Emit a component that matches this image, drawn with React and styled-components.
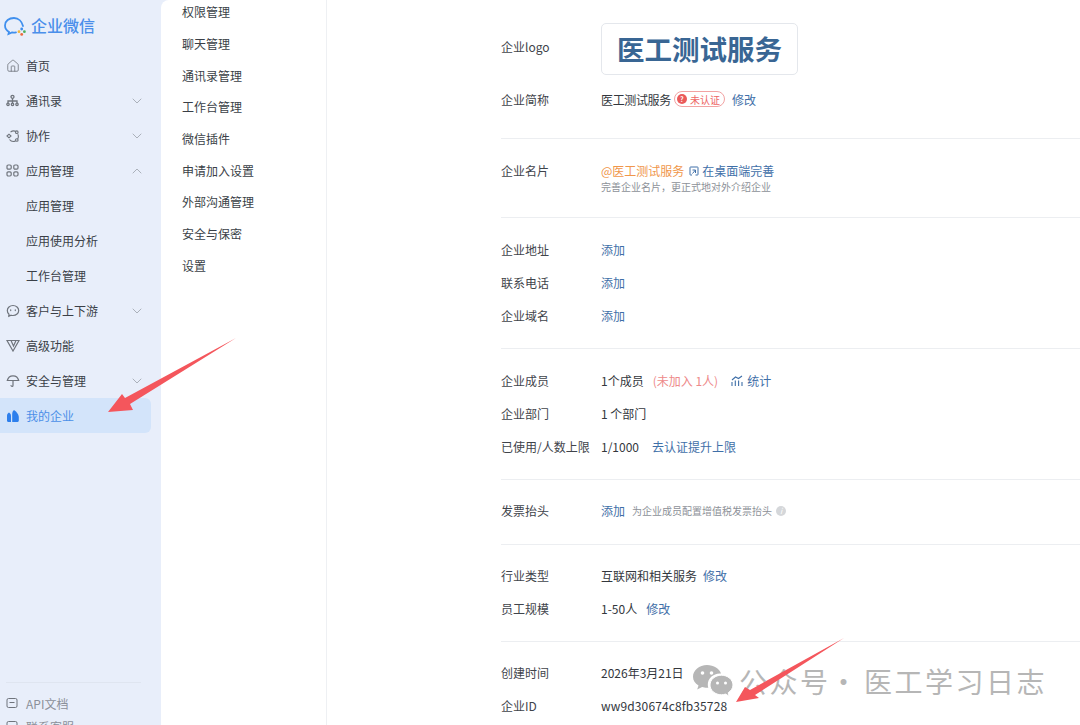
import React from 'react';
import styled, { createGlobalStyle } from 'styled-components';
import { ChevronDown, ChevronUp, Home } from 'lucide-react';

const GlobalStyle = createGlobalStyle`
  html, body {
    margin: 0;
    padding: 0;
    background: #fff;
  }
  body {
    font-family: "Noto Sans CJK SC", "Noto Sans", sans-serif;
    font-size: 12px;
    color: #33373d;
  }
`;

const Page = styled.div`
  position: relative;
  display: flex;
  width: 1080px;
  height: 725px;
  overflow: hidden;
  background: #e8eefa;
`;

// left navigation
const Sidebar = styled.aside`
  flex: 0 0 161px;
  display: flex;
  flex-direction: column;
  height: 725px;
`;

const Brand = styled.div`
  display: flex;
  align-items: center;
  gap: 4px;
  height: 48px;
  box-sizing: border-box;
  padding: 2px 0 0 3px;
  color: #4a8fea;
  font-size: 16px;
  font-weight: 500;
`;

const NavList = styled.nav`
  display: flex;
  flex-direction: column;
`;

const NavItem = styled.div`
  display: flex;
  align-items: center;
  height: 35px;
  width: 151px;
  box-sizing: border-box;
  padding-left: ${p => (p.$sub ? '26px' : '6px')};
  border-radius: 0 6px 6px 0;
  color: ${p => (p.$active ? '#4b8fe8' : '#3a3f47')};
  background: ${p => (p.$active ? '#d3e4fa' : 'transparent')};
`;

const NavIcon = styled.span`
  display: flex;
  width: 20px;
  color: ${p => (p.$active ? '#2d7fec' : '#6f747c')};
`;

const Caret = styled.span`
  display: flex;
  margin-left: auto;
  margin-right: 6px;
  color: #9ba1aa;
`;

const SideFooter = styled.div`
  margin-top: auto;
  margin-left: 6px;
  margin-right: 20px;
  border-top: 1px solid #dfe5f0;
  height: 43px;
  box-sizing: border-box;
  padding-top: 10px;
  color: #8b9099;
  overflow: hidden;
`;

const FooterLink = styled.div`
  display: flex;
  align-items: center;
  height: 20px;
  margin-bottom: 3px;
`;

// white panel with the rounded corner
const Panel = styled.div`
  flex: 1;
  display: flex;
  background: #fff;
  border-top-left-radius: 8px;
`;

const SubMenu = styled.div`
  flex: 0 0 166px;
  box-sizing: border-box;
  border-right: 1px solid #eef0f3;
  padding: 0 0 0 21px;
  margin-top: -4px;
  height: 729px;
`;

const SubItem = styled.div`
  display: flex;
  align-items: center;
  height: 31.67px;
  color: #3a3f47;
`;

// company info
const Content = styled.main`
  flex: 1;
  padding-left: 174px;
  display: flex;
  flex-direction: column;
`;

const Section = styled.section`
  display: flex;
  flex-direction: column;
  padding: ${p => p.$pad || '15px 0 16px'};
  border-bottom: ${p => (p.$last ? 'none' : '1px solid #eceef1')};
`;

const Row = styled.div`
  display: flex;
  align-items: ${p => (p.$top ? 'flex-start' : 'center')};
  height: ${p => p.$h || '33px'};
  margin-top: ${p => p.$mt || '0'};
`;

const Label = styled.div`
  flex: 0 0 100px;
  color: #3f444b;
`;

const LogoLabel = styled(Label)`
  margin-top: -6px;
`;

const Value = styled.div`
  display: flex;
  align-items: center;
  color: ${p => p.$color || '#33373d'};
  margin-left: ${p => p.$ml || '0'};
`;

const IdText = styled(Value)`
  letter-spacing: 0.12px;
`;

const ShortName = styled.span`
  letter-spacing: -0.35px;
`;

const Link = styled.span`
  display: inline-flex;
  align-items: center;
  color: #3f6fa8;
  margin-left: ${p => p.$ml || '0'};
`;

const Hint = styled.span`
  color: #8d9198;
  font-size: 10px;
  margin-left: ${p => p.$ml || '0'};
`;

const LogoBox = styled.div`
  display: flex;
  align-items: center;
  justify-content: center;
  width: 197px;
  height: 52px;
  box-sizing: border-box;
  padding-bottom: 3px;
  border: 1px solid #e4e7ec;
  border-radius: 5px;
  color: #396694;
  font-size: 27.5px;
  font-weight: 700;
`;

const Badge = styled.span`
  display: inline-flex;
  align-items: center;
  gap: 3px;
  height: 14px;
  margin-left: 3px;
  padding: 0 4px 0 2px;
  border: 1px solid #f2a3a3;
  border-radius: 8px;
  color: #e66;
  font-size: 10px;
`;

const BadgeDot = styled.span`
  display: flex;
  align-items: center;
  justify-content: center;
  width: 10px;
  height: 10px;
  border-radius: 50%;
  background: #ea5a5a;
  color: #fff;
  font-size: 7px;
  font-weight: 700;
`;

const InfoDot = styled.span`
  display: inline-flex;
  align-items: center;
  justify-content: center;
  width: 10px;
  height: 10px;
  margin-left: 4px;
  border-radius: 50%;
  background: #d5d7da;
  color: #fff;
  font-size: 8px;
  font-style: italic;
`;

const Stack = styled.div`
  display: flex;
  flex-direction: column;
`;

// annotation arrows and watermark lying over the page
const Overlay = styled.svg`
  position: absolute;
  left: 0;
  top: 0;
  pointer-events: none;
`;

const Watermark = styled.div`
  position: absolute;
  left: 693px;
  top: 661px;
  display: flex;
  align-items: center;
  height: 40px;
  color: #b6b6b6;
  font-size: 28px;
  letter-spacing: 2.5px;
  white-space: nowrap;
`;

const WatermarkPart = styled.span`
  margin-left: ${p => p.$ml};
`;

const Logo = () => (
  <svg width="24" height="24" viewBox="0 0 24 24" fill="none">
    <path d="M20 13C19 8.500 15.500 5 11 5 6 5 2 8 2 12.500c0 2.800 1.600 5 4 6.500l-.5 2 3.500-1.500c1.500.2 3 .1 4-.2" stroke="#3f8fee" strokeWidth="1.800" strokeLinecap="round" />
    <circle cx="18.700" cy="16" r="1.400" fill="#3f8fee" />
    <circle cx="16" cy="18.700" r="1.400" fill="#f1b53c" />
    <circle cx="21.400" cy="18.700" r="1.400" fill="#4fb05f" />
    <circle cx="18.700" cy="21.400" r="1.400" fill="#ec6a3c" />
  </svg>
);

const Org = () => (
  <svg width="13" height="13" viewBox="0 0 13 13" fill="none" stroke="currentColor" strokeWidth="1.300">
    <circle cx="6.500" cy="2.800" r="1.500" />
    <path d="M2 9V7h9v2M6.500 4.500V9" />
    <circle cx="2" cy="10.300" r="1.200" />
    <circle cx="6.500" cy="10.300" r="1.200" />
    <circle cx="11" cy="10.300" r="1.200" />
  </svg>
);

const Collab = () => (
  <svg width="14" height="14" viewBox="0 0 14 14" fill="none" stroke="currentColor" strokeWidth="1.100">
    <path d="M4.500 3.200A5 5 0 0 1 10 2.500M11.800 5.200a5 5 0 0 1-.3 5M9.500 12A5 5 0 0 1 3.500 10.500" />
    <path d="M1 7l2-1.800L5 7 3 8.800z" />
    <circle cx="10.800" cy="3.200" r="1.300" />
    <circle cx="10.800" cy="11" r="1.300" />
  </svg>
);

const Apps = () => (
  <svg width="13" height="13" viewBox="0 0 13 13" fill="none" stroke="currentColor" strokeWidth="1.200">
    <rect x="1" y="1" width="4.200" height="4.200" rx="1.200" />
    <rect x="7.800" y="1" width="4.200" height="4.200" rx="1.200" />
    <rect x="1" y="7.800" width="4.200" height="4.200" rx="1.200" />
    <rect x="7.800" y="7.800" width="4.200" height="4.200" rx="1.200" />
  </svg>
);

const Chat = () => (
  <svg width="14" height="14" viewBox="0 0 14 14" fill="none" stroke="currentColor" strokeWidth="1.200">
    <path d="M7 1.500c3.200 0 5.700 2.200 5.700 5s-2.500 5-5.700 5c-.7 0-1.300-.1-1.900-.3l-2.300 1.100.2-2.100C1.900 9.300 1.300 8 1.300 6.500c0-2.800 2.500-5 5.700-5z" />
    <path d="M4.700 5.800v.8M9.300 5.800v.8" strokeLinecap="round" />
  </svg>
);

const Advanced = () => (
  <svg width="14" height="13" viewBox="0 0 14 13" fill="none" stroke="currentColor" strokeWidth="1.200">
    <path d="M1 1.500h12L7 12z" />
    <path d="M5 1.500L7.500 7 10 1.500" />
  </svg>
);

const Umbrella = () => (
  <svg width="14" height="14" viewBox="0 0 14 14" fill="none" stroke="currentColor" strokeWidth="1.200">
    <path d="M1.300 6.500C2 3.500 4.200 1.800 7 1.800s5 1.700 5.700 4.700z" />
    <path d="M7 6.500v5c0 1.200-1.800 1.200-2 0" strokeLinecap="round" />
  </svg>
);

const Company = () => (
  <svg width="14" height="14" viewBox="0 0 14 14" fill="currentColor">
    <path d="M1 6.500C1 5 2 4 3 3.500c.8.600 2 1.800 2 3V13H2.200C1.500 13 1 12.500 1 11.800z" />
    <path d="M6.200 5c0-1.800.8-3.200 1.800-4 1.500 1 4.800 4 4.800 7v3.800c0 .7-.5 1.200-1.200 1.200H6.200z" />
  </svg>
);

const ApiDoc = () => (
  <svg width="12" height="12" viewBox="0 0 12 12" fill="none" stroke="currentColor" strokeWidth="1">
    <rect x="1" y="1.500" width="10" height="9" rx="1.500" />
    <path d="M3.500 5.500h5" />
  </svg>
);

const OpenBox = () => (
  <svg width="10" height="10" viewBox="0 0 10 10" fill="none" stroke="#3f6fa8" strokeWidth="1" style={{ marginRight: 3 }}>
    <path d="M3 9H1.500a.5.500 0 0 1-.5-.500V1.500a.5.500 0 0 1 .5-.500h7a.5.500 0 0 1 .5.500V8.500a.5.500 0 0 1-.5.500H6.500" />
    <path d="M3.500 4H6.500V7M6.500 4L3.500 7.500" />
  </svg>
);

const Stat = () => (
  <svg width="12" height="12" viewBox="0 0 12 12" fill="none" stroke="#3f6fa8" strokeWidth="1.100" style={{ marginRight: 4 }}>
    <path d="M1 11V7M4.300 11V5.500M7.600 11V5.500M11 11V7M1 5L4.500 2l3 1.500L11 1" />
  </svg>
);

const WeChat = () => (
  <svg width="40" height="33" viewBox="0 0 40 33">
    <path fill="#b6b6b6" d="M14 0C6.300 0 0 5.200 0 11.700c0 3.700 2.100 6.700 5.500 8.900l-1.300 4 4.900-2.500c1.600.4 3 .7 4.900.7h1.300c-.3-1-.5-2-.5-3 0-6.200 5.300-11.200 12-11.200h1.200C26.600 3.800 20.800 0 14 0z" />
    <path fill="#b6b6b6" stroke="#fff" strokeWidth="1" d="M40 20c0-5.400-5.400-9.800-11.500-9.800C22.100 10.200 17 14.600 17 20s5.100 9.800 11.500 9.800c1.300 0 2.700-.3 4-.7l3.700 2.100-1-3.400C37.900 26 40 23.200 40 20z" />
    <g fill="#fff">
      <circle cx="9.500" cy="8" r="1.800" />
      <circle cx="18.500" cy="8" r="1.800" />
      <circle cx="24.500" cy="18" r="1.500" />
      <circle cx="32.500" cy="18" r="1.500" />
    </g>
  </svg>
);

const navItems = [
  { text: '首页', icon: <Home size={14} strokeWidth={1.4} /> },
  { text: '通讯录', icon: <Org />, caret: 'down' },
  { text: '协作', icon: <Collab />, caret: 'down' },
  { text: '应用管理', icon: <Apps />, caret: 'up' },
  { text: '应用管理', sub: true },
  { text: '应用使用分析', sub: true },
  { text: '工作台管理', sub: true },
  { text: '客户与上下游', icon: <Chat />, caret: 'down' },
  { text: '高级功能', icon: <Advanced /> },
  { text: '安全与管理', icon: <Umbrella />, caret: 'down' },
  { text: '我的企业', icon: <Company />, active: true },
];

const subItems = ['权限管理', '聊天管理', '通讯录管理', '工作台管理', '微信插件', '申请加入设置', '外部沟通管理', '安全与保密', '设置'];

export default function App() {
  return (
    <Page>
      <GlobalStyle />
      <Sidebar>
        <Brand>
          <Logo />
          企业微信
        </Brand>
        <NavList>
          {navItems.map((item, i) => (
            <NavItem key={i} $sub={item.sub} $active={item.active}>
              {item.icon && <NavIcon $active={item.active}>{item.icon}</NavIcon>}
              {item.text}
              {item.caret && (
                <Caret>
                  {item.caret === 'up' ? <ChevronUp size={16} strokeWidth={1.2} /> : <ChevronDown size={16} strokeWidth={1.2} />}
                </Caret>
              )}
            </NavItem>
          ))}
        </NavList>
        <SideFooter>
          <FooterLink><NavIcon><ApiDoc /></NavIcon>API文档</FooterLink>
          <FooterLink><NavIcon><ApiDoc /></NavIcon>联系客服</FooterLink>
        </SideFooter>
      </Sidebar>
      <Panel>
        <SubMenu>
          {subItems.map(s => <SubItem key={s}>{s}</SubItem>)}
        </SubMenu>
        <Content>
          <Section $pad="23px 0 20px">
            <Row $h="52px"><LogoLabel>企业logo</LogoLabel><LogoBox>医工测试服务</LogoBox></Row>
            <Row $h="38px" $mt="5px">
              <Label>企业简称</Label>
              <Value><ShortName>医工测试服务</ShortName><Badge><BadgeDot>?</BadgeDot>未认证</Badge><Link $ml="7px">修改</Link></Value>
            </Row>
          </Section>
          <Section $pad="23px 0 19px">
            <Row $h="36px" $top>
              <Label>企业名片</Label>
              <Stack>
                <Value $color="#f0964a"><span>@医工测试服务</span><Link $ml="5px"><OpenBox />在桌面端完善</Link></Value>
                <Hint>完善企业名片，更正式地对外介绍企业</Hint>
              </Stack>
            </Row>
          </Section>
          <Section>
            <Row><Label>企业地址</Label><Link>添加</Link></Row>
            <Row><Label>联系电话</Label><Link>添加</Link></Row>
            <Row><Label>企业域名</Label><Link>添加</Link></Row>
          </Section>
          <Section>
            <Row><Label>企业成员</Label><Value>1个成员<Value $color="#ee8a8a" $ml="9px">(未加入 1人)</Value><Link $ml="13px"><Stat />统计</Link></Value></Row>
            <Row><Label>企业部门</Label><Value>1 个部门</Value></Row>
            <Row><Label>已使用/人数上限</Label><Value>1/1000<Link $ml="13px">去认证提升上限</Link></Value></Row>
          </Section>
          <Section $pad="14px 0 17px">
            <Row><Label>发票抬头</Label><Link>添加</Link><Hint $ml="7px">为企业成员配置增值税发票抬头</Hint><InfoDot>i</InfoDot></Row>
          </Section>
          <Section $pad="14px 0 16px">
            <Row><Label>行业类型</Label><Value>互联网和相关服务<Link $ml="6px">修改</Link></Value></Row>
            <Row><Label>员工规模</Label><Value>1-50人<Link $ml="9px">修改</Link></Value></Row>
          </Section>
          <Section $last $pad="14px 0 0">
            <Row><Label>创建时间</Label><Value>2026年3月21日</Value></Row>
            <Row><Label>企业ID</Label><IdText>ww9d30674c8fb35728</IdText></Row>
          </Section>
        </Content>
      </Panel>
      <Watermark>
        <WeChat />
        <WatermarkPart $ml="6px">公众号</WatermarkPart>
        <WatermarkPart $ml="-1px">·</WatermarkPart>
        <WatermarkPart $ml="4px">医工学习日志</WatermarkPart>
      </Watermark>
      <Overlay width="1080" height="725" viewBox="0 0 1080 725">
        <path fill="#f4565c" d="M236 338L130 404l3 6-25 2 14-18 3 4z" />
        <path fill="#f4565c" d="M844 638L755 695l4 3-23 4 9-15 5 3z" />
      </Overlay>
    </Page>
  );
}
